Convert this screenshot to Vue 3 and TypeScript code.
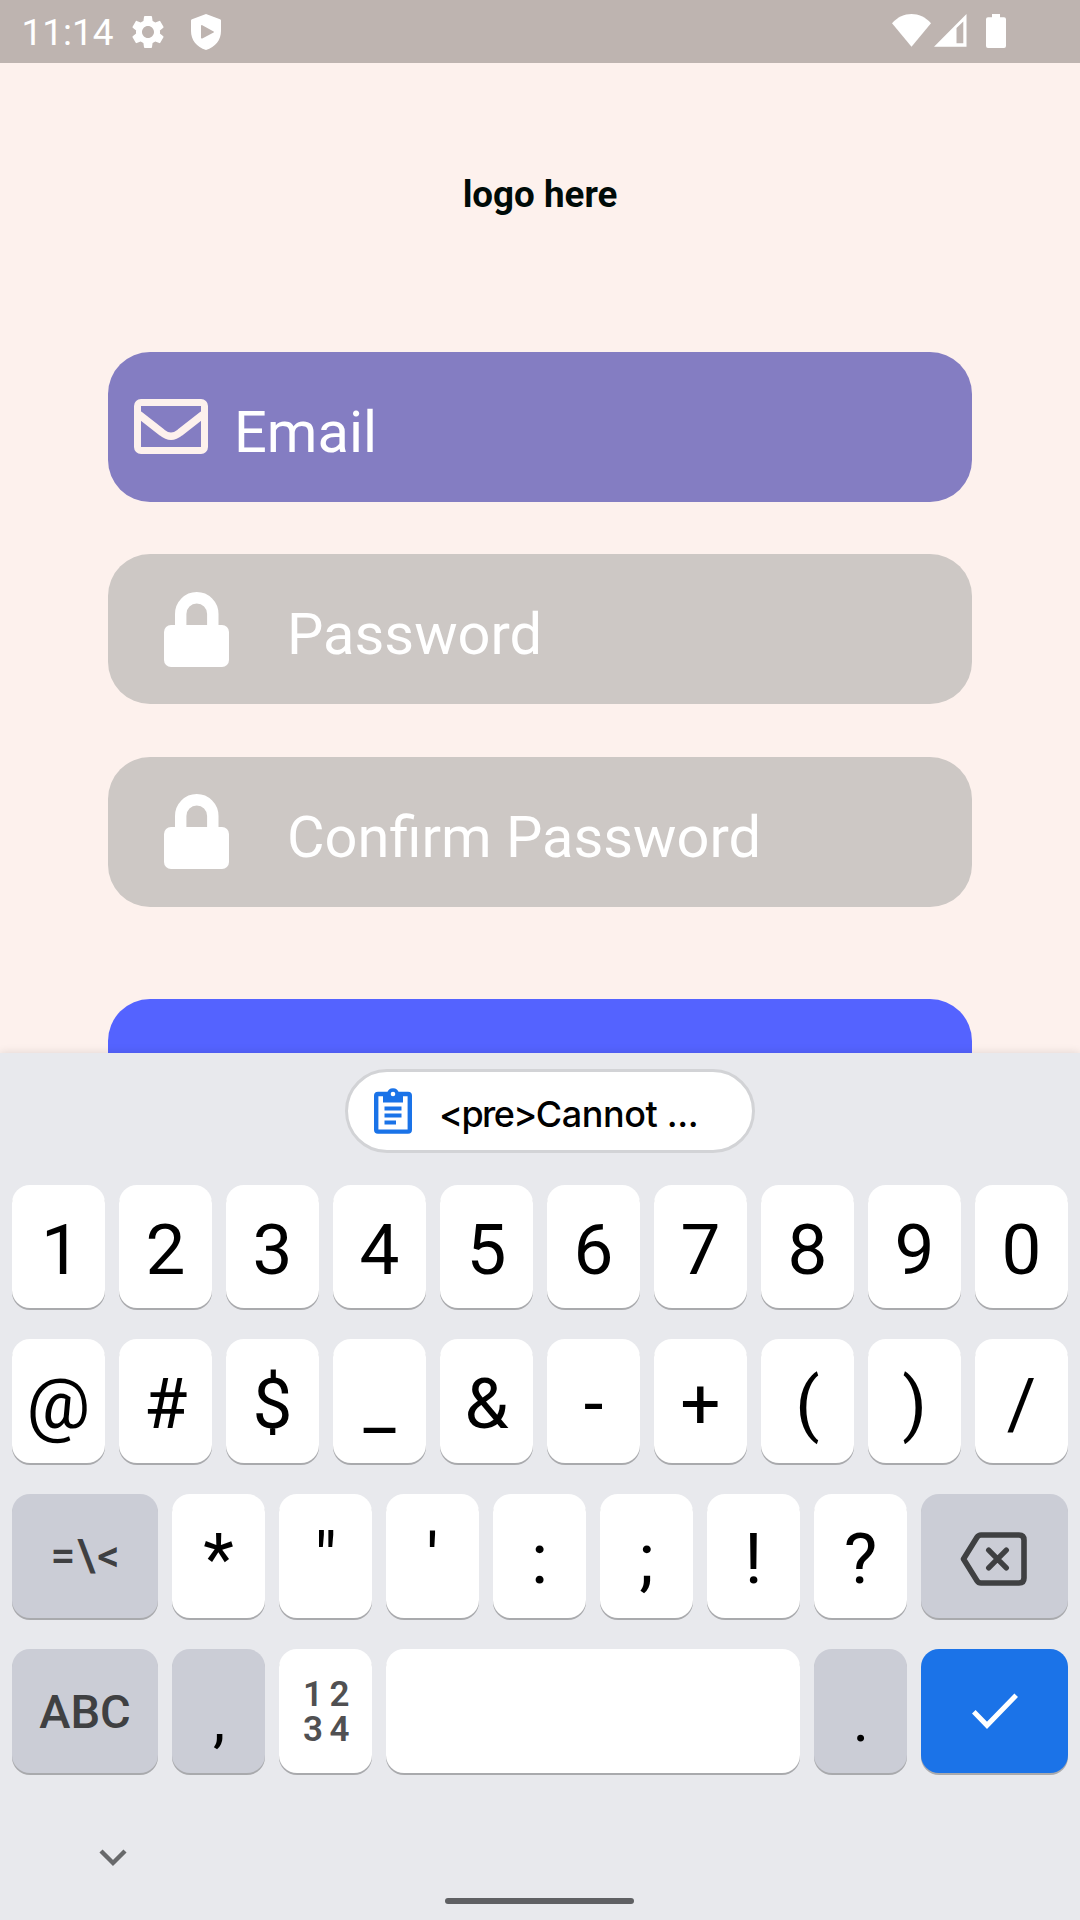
<script setup lang="ts">
interface Key {
  label: string
  kind?: 'one' | 'symbols' | 'letters' | 'punct' | 'digits' | 'space' | 'backspace' | 'enter'
}

const toKeys = (chars: string): Key[] => chars.split('').map((label) => ({ label }))

const rows: Key[][] = [
  [{ label: '1', kind: 'one' }, ...toKeys('234567890')],
  toKeys('@#$_&-+()/'),
  [{ label: '=\\<', kind: 'symbols' }, ...toKeys('*"\':;!?'), { label: '', kind: 'backspace' }],
  [
    { label: 'ABC', kind: 'letters' },
    { label: ',', kind: 'punct' },
    { label: '12\n34', kind: 'digits' },
    { label: '', kind: 'space' },
    { label: '.', kind: 'punct' },
    { label: '', kind: 'enter' },
  ],
]

const passwordFields: string[] = ['Password', 'Confirm Password']
</script>

<template>
  <div class="screen">
    <header class="status">
      <span class="time">11:14</span>
      <svg class="gear" viewBox="0 0 24 24" width="40" height="40">
        <path
          fill="#fff"
          d="M19.14 12.94c.04-.3.06-.61.06-.94 0-.32-.02-.64-.07-.94l2.03-1.58a.49.49 0 0 0 .12-.61l-1.92-3.32a.488.488 0 0 0-.59-.22l-2.39.96c-.5-.38-1.03-.7-1.62-.94l-.36-2.54a.484.484 0 0 0-.48-.41h-3.84c-.24 0-.43.17-.47.41l-.36 2.54c-.59.24-1.13.57-1.62.94l-2.39-.96c-.22-.08-.47 0-.59.22L2.74 8.87c-.12.21-.08.47.12.61l2.03 1.58c-.05.3-.09.63-.09.94s.02.64.07.94l-2.03 1.58a.49.49 0 0 0-.12.61l1.92 3.32c.12.22.37.29.59.22l2.39-.96c.5.38 1.03.7 1.62.94l.36 2.54c.05.24.24.41.48.41h3.84c.24 0 .44-.17.47-.41l.36-2.54c.59-.24 1.13-.56 1.62-.94l2.39.96c.22.08.47 0 .59-.22l1.92-3.32c.12-.22.07-.47-.12-.61l-2.01-1.58zM12 15.6c-1.98 0-3.6-1.62-3.6-3.6s1.62-3.6 3.6-3.6 3.6 1.62 3.6 3.6-1.62 3.6-3.6 3.6z"
        />
      </svg>
      <svg class="shield" viewBox="0 0 30 36" width="30" height="36">
        <path
          fill="#fff"
          fill-rule="evenodd"
          d="M15 0 29 5.2Q30 5.6 30 6.6V17C30 26 24.5 33 15 36 5.500 33 0 26 0 17V6.600Q0 5.600 1 5.200ZM10 12.200V23.600Q10 25 11.300 24.400L22.600 18.600Q23.600 18 22.600 17.400L11.300 11.200Q10 10.800 10 12.200Z"
        />
      </svg>
      <svg class="wifi" viewBox="0 0 39 33" width="39" height="33">
        <path fill="#fff" d="M0 9.200C11 -3 28 -3 39 9.200L19.500 32.700Z" />
      </svg>
      <svg class="signal" viewBox="0 0 33 33" width="33" height="33">
        <path fill="#fff" fill-rule="evenodd" d="M0 32.700 32.500 0V32.700ZM22.500 14V29.200H29.300V7.500Z" />
      </svg>
      <svg class="battery" viewBox="0 0 20 34" width="20" height="34">
        <path fill="#fff" d="M6 0H14V3.300H18Q20 3.300 20 5.300V32Q20 34 18 34H2Q0 34 0 32V5.300Q0 3.300 2 3.300H6Z" />
      </svg>
    </header>

    <main class="form">
      <div class="logo">logo here</div>
      <div class="field email">
        <svg viewBox="0 0 74 55" width="74" height="55">
          <rect x="3.500" y="3.500" width="67" height="48" rx="3.500" fill="none" stroke="#fdf1ed" stroke-width="7" />
          <path d="M5 15.500 28 33.500Q37 41 46 33.500L69 15.500" fill="none" stroke="#fdf1ed" stroke-width="7.400" />
        </svg>
        <span>Email</span>
      </div>
      <div v-for="name in passwordFields" :key="name" class="field password">
        <svg viewBox="0 0 65 75" width="65" height="75">
          <path d="M16.700 38V22A15.800 16 0 0 1 48.800 22V38" fill="none" stroke="#fff" stroke-width="11.400" />
          <rect x="0" y="33" width="65" height="42" rx="7" fill="#fff" />
        </svg>
        <span>{{ name }}</span>
      </div>
      <div class="submit"></div>
    </main>

    <section class="keyboard">
      <div class="chip">
        <svg viewBox="0 0 38 47" width="38" height="47">
          <rect x="2.200" y="7" width="33.600" height="37.600" rx="1.800" fill="none" stroke="#1a73e8" stroke-width="4.400" />
          <path fill="#1a73e8" d="M9 6H13.200A5.900 5.900 0 0 1 24.800 6H29V15.400H9Z" />
          <circle cx="19" cy="7" r="2.300" fill="#fff" />
          <path stroke="#1a73e8" stroke-width="4" d="M10.500 21.500H27.500M10.500 28.500H27.500M10.500 35.500H22" />
        </svg>
        <p class="clip"><span class="tag">&lt;pre&gt;</span>Cannot ...</p>
      </div>

      <div class="rows">
        <div v-for="(row, r) in rows" :key="r" class="row">
          <div v-for="(key, k) in row" :key="k" class="key" :class="key.kind">
            <svg v-if="key.kind === 'backspace'" viewBox="0 0 67 54" width="67" height="54">
              <path
                d="M21 3H59Q64 3 64 8V46Q64 51 59 51H21Q18.500 51 17 48.700L3.500 27 17 5.300Q18.500 3 21 3Z"
                fill="none"
                stroke="#3f4042"
                stroke-width="5.600"
                stroke-linejoin="round"
              />
              <path d="M28.700 18.200 46.300 35.800M46.300 18.200 28.700 35.800" stroke="#3f4042" stroke-width="5.400" stroke-linecap="round" />
            </svg>
            <svg v-else-if="key.kind === 'enter'" viewBox="0 0 46 36" width="46" height="36">
              <path d="M1.800 18.800 15 32.300 44.200 2.200" fill="none" stroke="#fff" stroke-width="5" />
            </svg>
            <span v-else>{{ key.label }}</span>
          </div>
        </div>
      </div>

      <svg class="collapse" viewBox="0 0 28 18" width="28" height="18">
        <path d="M2 2 14 14 26 2" fill="none" stroke="#68696b" stroke-width="4.400" />
      </svg>
      <div class="home"></div>
    </section>
  </div>
</template>

<style>
body {
  margin: 0;
}
</style>

<style scoped>
.screen {
  width: 1080px;
  height: 1920px;
  overflow: hidden;
  display: flex;
  flex-direction: column;
  background: #fdf1ed;
  font-family: Roboto, 'Liberation Sans', sans-serif;
}
svg {
  display: block;
  flex: none;
}
.status {
  height: 63px;
  flex: none;
  display: flex;
  align-items: flex-start;
  background: #beb4b0;
  color: #fff;
}
.time {
  width: 106.500px;
  margin-left: 21.500px;
  font-size: 37px;
  line-height: 66px;
}
.gear {
  margin-top: 12px;
}
.shield {
  margin: 14px 0 0 23px;
}
.wifi {
  margin: 14px 0 0 671px;
}
.signal {
  margin: 14px 0 0 3px;
}
.battery {
  margin: 14px 0 0 19px;
}
.form {
  height: 990px;
  flex: none;
  display: flex;
  flex-direction: column;
  align-items: center;
  overflow: hidden;
}
.logo {
  margin-top: 102px;
  height: 60px;
  line-height: 60px;
  font-size: 36.75px;
  font-weight: 700;
  color: #000b08;
}
.field {
  width: 864px;
  height: 150px;
  flex: none;
  box-sizing: border-box;
  border-radius: 42px;
  display: flex;
  align-items: flex-start;
  background: #cdc8c5;
  color: #fff;
  font-size: 57.75px;
  line-height: 68px;
  margin-bottom: 52.400px;
}
.field span {
  margin-top: 46px;
}
.email {
  margin-top: 127px;
  background: #847dc2;
}
.email svg {
  margin: 47px 26px 0 26px;
}
.password svg {
  margin: 37.700px 58px 0 56px;
}
.submit {
  width: 864px;
  height: 150px;
  flex: none;
  margin-top: 39.900px;
  border-radius: 42px;
  background: #5463ff;
}
.keyboard {
  position: relative;
  flex: 1;
  display: flex;
  flex-direction: column;
  background: #e8e9ed;
  box-shadow: 0 0 9px rgba(0, 0, 0, 0.12);
}
.chip {
  width: 410px;
  height: 84px;
  flex: none;
  box-sizing: border-box;
  margin: 16px 0 0 345px;
  padding-left: 26px;
  display: flex;
  border: 3px solid #d2d3d6;
  border-radius: 42px;
  background: #fff;
}
.chip svg {
  margin-top: 15px;
}
.clip {
  margin: 0 0 0 27px;
  font-family: Inter, 'Open Sans', sans-serif;
  font-size: 36px;
  font-weight: 450;
  line-height: 84px;
  letter-spacing: -0.4px;
  white-space: nowrap;
  color: #000;
}
.tag {
  letter-spacing: -1.600px;
}
.rows {
  margin: 32px 12px 0;
  display: flex;
  flex-direction: column;
  gap: 31px;
}
.row {
  display: flex;
  gap: 14px;
  height: 124px;
}
.row:first-child {
  height: 123px;
}
.key {
  width: 93px;
  flex: none;
  box-sizing: border-box;
  padding-top: 5px;
  display: flex;
  align-items: center;
  justify-content: center;
  border-radius: 18px;
  background: #fff;
  box-shadow: 0 2px 0 #a9aaad;
  color: #000;
  font-size: 71px;
  line-height: 84px;
}
.row:first-child .key {
  padding-top: 6px;
}
.one {
  padding-left: 5px;
}
.symbols,
.letters {
  width: 146px;
  padding-top: 0;
  background: #cbcdd6;
  color: #3f4042;
  font-weight: 500;
}
.symbols {
  padding-left: 2px;
  font-size: 44px;
  letter-spacing: 1.800px;
}
.letters {
  padding-top: 2px;
  font-size: 47px;
}
.punct {
  padding: 18px 0 0 1px;
  background: #cbcdd6;
  font-size: 62px;
}
.digits {
  padding: 1px 0 0 8px;
  font-size: 35px;
  line-height: 35px;
  font-weight: 600;
  letter-spacing: 6.500px;
  white-space: pre-line;
  color: #505052;
}
.space {
  width: 414px;
}
.backspace,
.enter {
  width: 147px;
  background: #cbcdd6;
}
.backspace {
  padding: 5px 3px 0 0;
}
.enter {
  padding: 0;
  background: #1b73e8;
}
.collapse {
  margin: 76px 0 0 99px;
}
.home {
  width: 189px;
  height: 6px;
  margin: 31px 0 0 445px;
  border-radius: 3px;
  background: #5f6063;
}
</style>
